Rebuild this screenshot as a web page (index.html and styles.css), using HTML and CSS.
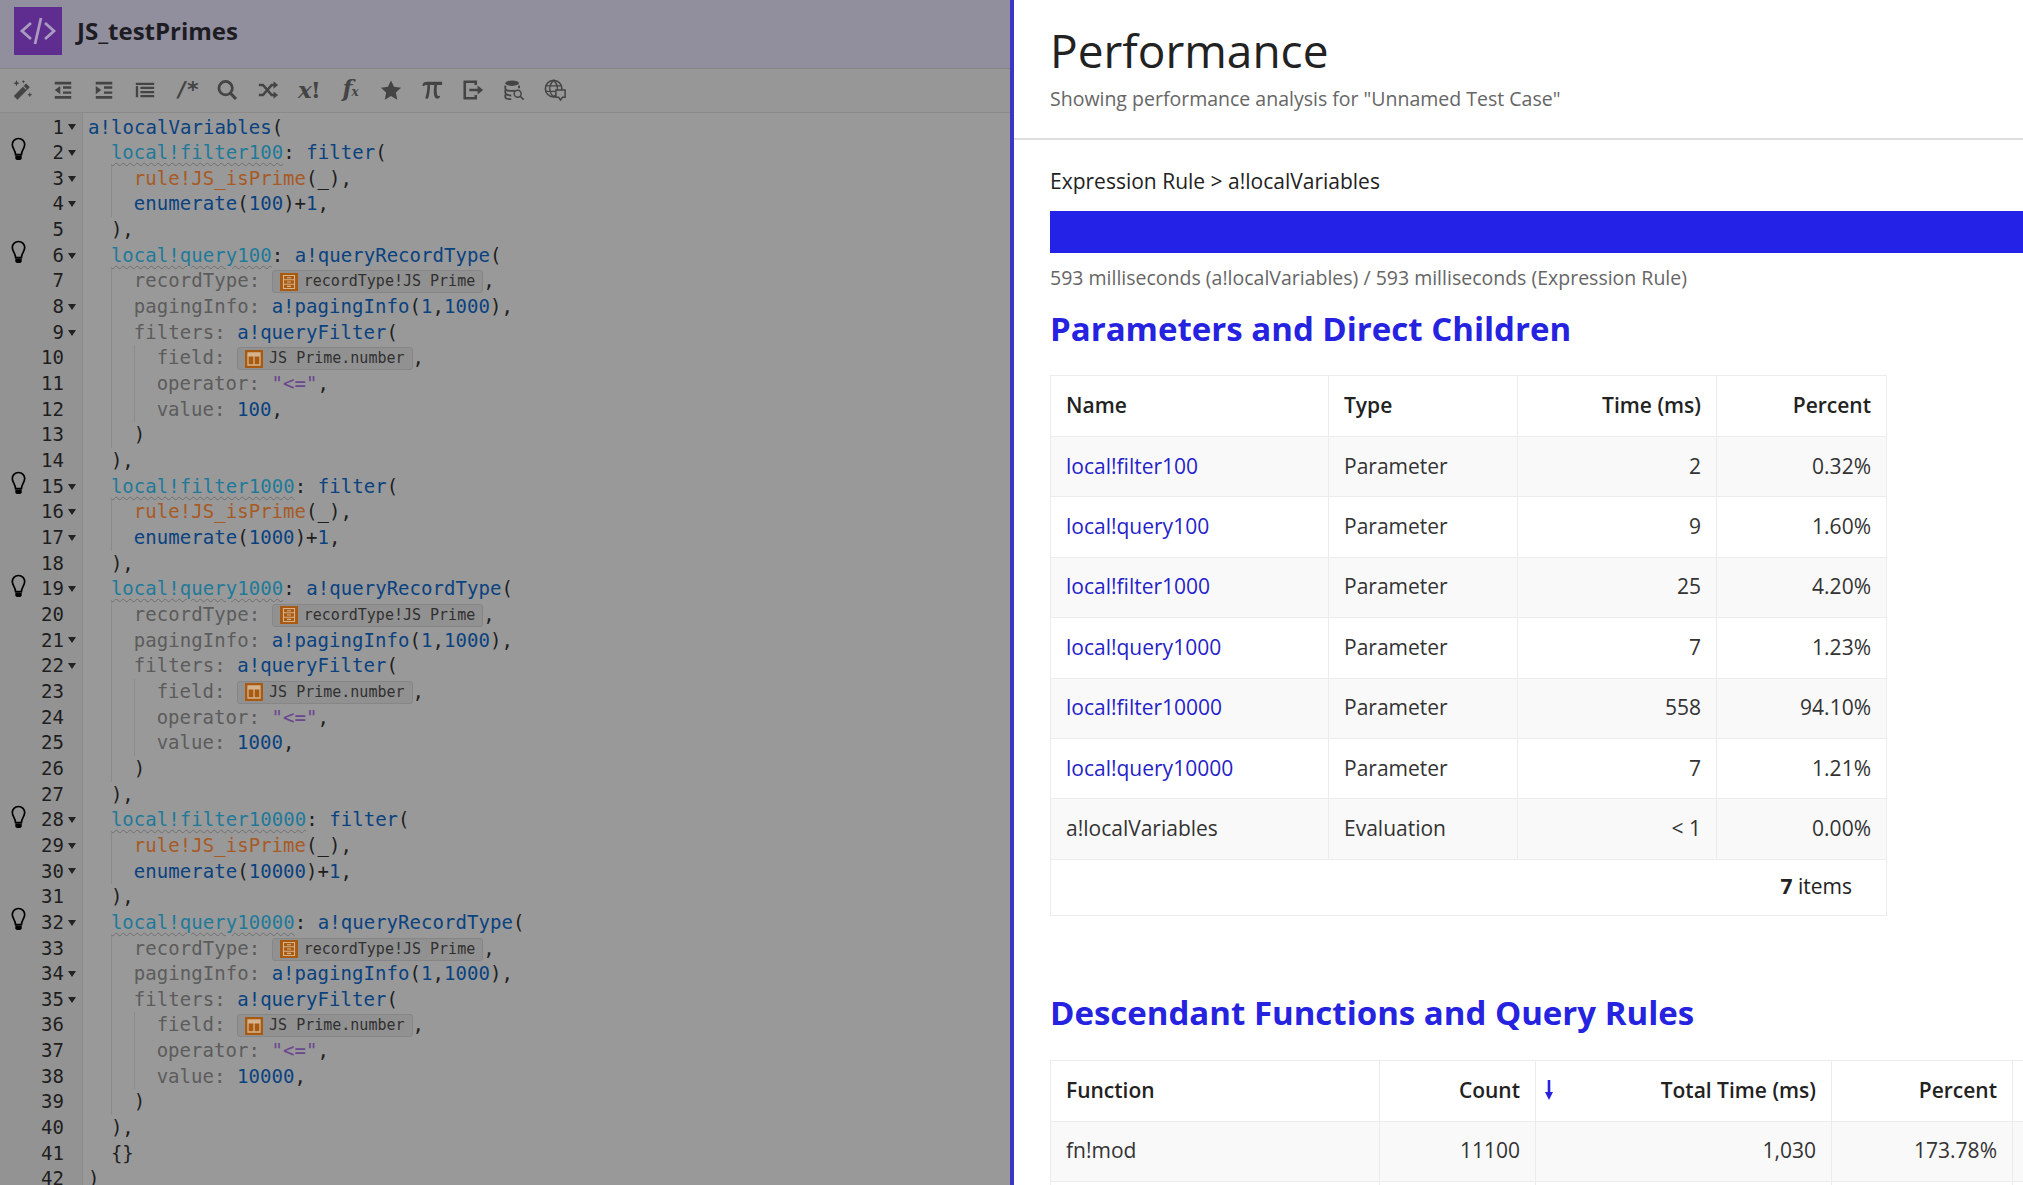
FILE: index.html
```html
<!DOCTYPE html>
<html lang="en">
<head>
<meta charset="utf-8">
<title>JS_testPrimes - Performance</title>
<link rel="stylesheet" href="styles.css">
</head>
<body>
<svg class="defs" aria-hidden="true">
  <symbol id="bulb" viewBox="0 0 16 24"><path d="M8 1.5C4.2 1.5 1.8 4.4 1.8 7.6c0 3.6 3 5.4 3.3 10h5.8c.3-4.6 3.3-6.4 3.3-10C14.200 4.400 11.800 1.500 8 1.500z" fill="none" stroke="#000" stroke-width="1.700"/><path d="M4.800 18.500h6.400v3.200l-1.400 1.300H6.200l-1.400-1.300z" fill="#000"/></symbol>
  <symbol id="rec" viewBox="0 0 18 18"><rect width="18" height="18" fill="#a85a10"/><path d="M3.500 2.500h11v13h-11zM3.500 6.800h11M3.500 11.200h11M7 4.700h4M7 9h4M7 13.400h4" fill="none" stroke="#d4b48e" stroke-width="1.100"/></symbol>
  <symbol id="fld" viewBox="0 0 18 18"><rect width="18" height="18" fill="#a85a10"/><path d="M3 3h12v12H3z" fill="none" stroke="#d4b48e" stroke-width="1.300"/><path d="M3 3h12v3.500H3z" fill="#d4b48e"/><path d="M9 6v9" stroke="#d4b48e" stroke-width="1.300"/></symbol>
</svg>
<div class="app">
  <section class="editor">
    <header class="ehead">
      <div class="logo">
        <svg viewBox="0 0 48 48" class="logo-svg"><path d="M17 16 8 24l9 8M31 16l9 8-9 8M27 11l-6 26" fill="none" stroke="#a99cc0" stroke-width="2.800"/></svg>
      </div>
      <h1 class="ename">JS_testPrimes</h1>
    </header>
    <div class="tools">
      <svg class="tool" viewBox="0 0 24 24"><path d="M3 18.500 16.500 5l4 4L7 22.500z" fill="#444"/><path d="M13.500 8l3 3" stroke="#979797" stroke-width="1.200"/><path d="M6 1l1 2.500L9.500 4.500 7 5.500 6 8 5 5.500 2.500 4.500 5 3.500zM20.500 14.500l.8 1.900 1.900.8-1.900.8-.8 1.900-.8-1.900-1.900-.8 1.900-.8zM13.500 1l.6 1.300 1.300.6-1.300.6-.6 1.300-.6-1.300-1.300-.6 1.300-.6z" fill="#444"/></svg>
      <svg class="tool" viewBox="0 0 24 24"><path d="M3 3h18v3H3zM3 18.500h18v3H3zM12 8h9v2.500h-9zM12 13.500h9V16h-9zM9 7.500v9l-6-4.500z" fill="#444"/></svg>
      <svg class="tool" viewBox="0 0 24 24"><path d="M3 3h18v3H3zM3 18.500h18v3H3zM12 8h9v2.500h-9zM12 13.500h9V16h-9zM3 7.500v9L9 12z" fill="#444"/></svg>
      <svg class="tool" viewBox="0 0 24 24"><path d="M2 4h20v2.500H2zM2 7.500h2.500V20H2zM7 8.500h15V11H7zM7 13h15v2.500H7zM7 17.500h15V20H7z" fill="#444"/></svg>
      <span class="tool-t slash">/*</span>
      <svg class="tool" viewBox="0 0 24 24"><circle cx="10.500" cy="10" r="7.300" fill="none" stroke="#444" stroke-width="3"/><path d="m15.800 15.500 6 6.300" stroke="#444" stroke-width="3.400"/></svg>
      <svg class="tool" viewBox="0 0 24 24"><path d="M2 6.500h4.500L16 17.500h3M2 17.500h4.500L16 6.500h3" fill="none" stroke="#444" stroke-width="2.800"/><path d="M18 2.500l5 4-5 4zM18 13.500l5 4-5 4z" fill="#444"/></svg>
      <span class="tool-t xf"><em class="xi">x</em>!</span>
      <span class="tool-t xf"><em class="xi">f</em><small class="sub">x</small></span>
      <svg class="tool" viewBox="0 0 24 24"><path d="m12 1.500 3.300 7 7.700 1-5.700 5.200 1.500 7.800-6.800-3.900-6.800 3.900 1.500-7.800L1 9.500l7.700-1z" fill="#444"/></svg>
      <svg class="tool" viewBox="0 0 24 24"><path d="M1.500 7C2 4 4 3 6.500 3H23v3.500h-5.500c-.5 4-.6 8 .2 11 .3 1.200 1.500 1.500 2.300.7l1 .8c-1.200 2.300-3.200 3-4.800 2-2-1.300-2.500-5-2.200-9 .1-1.900.3-3.800.5-5.500H9.800c0 5-.6 10-1.800 14.300-.3 1-2.800 1-3.300-.1C6.300 16 7 11 7 6.500c-2 0-3.500.3-4.300 1.500z" fill="#444"/></svg>
      <svg class="tool" viewBox="0 0 24 24"><path d="M15 6.500V3H3v18h12v-3.500" fill="none" stroke="#444" stroke-width="2.800"/><path d="M8 10.700h9V7l6 5-6 5v-3.700H8z" fill="#444"/></svg>
      <svg class="tool" viewBox="0 0 24 24"><ellipse cx="10" cy="4.500" rx="7.500" ry="3" fill="#444"/><path d="M2.500 7v3c0 1.700 3.300 3 7.500 3 1 0 2-.1 2.800-.2M17.500 7v3M2.500 12v3c0 1.700 3.300 3 6.500 3M2.500 17v2.500c0 1.400 3 2.500 6.500 2.500" fill="none" stroke="#444" stroke-width="2"/><circle cx="16" cy="16" r="3.800" fill="none" stroke="#444" stroke-width="1.600"/><path d="m18.800 18.800 3.700 3.700" stroke="#444" stroke-width="1.800"/></svg>
      <svg class="tool" viewBox="0 0 24 24"><circle cx="10.500" cy="10.500" r="9" fill="none" stroke="#444" stroke-width="1.800"/><path d="M10.500 1.500c-5.500 5-5.500 13 0 18M10.500 1.500c5.500 5 5.500 13 0 18M1.500 7.500h18M1.500 13.500h12" fill="none" stroke="#444" stroke-width="1.500"/><path d="M13 12h10v8h-3l-2 3-2-3h-3z" fill="#979797" stroke="#444" stroke-width="1.600"/></svg>
    </div>
    <div class="code">
      <div class="line"><span class="gut"><span class="num">1</span><span class="fold"></span></span><span class="src"><b class="f">a!localVariables</b>(</span></div>
      <div class="line"><span class="gut"><svg class="bulb"><use href="#bulb"/></svg><span class="num">2</span><span class="fold"></span></span><span class="src"><i class="s"></i><b class="v">local!filter100</b>: <b class="f">filter</b>(</span></div>
      <div class="line"><span class="gut"><span class="num">3</span><span class="fold"></span></span><span class="src"><i class="s"></i><i class="g"></i><b class="r">rule!JS_isPrime</b>(_),</span></div>
      <div class="line"><span class="gut"><span class="num">4</span><span class="fold"></span></span><span class="src"><i class="s"></i><i class="g"></i><b class="f">enumerate</b>(<b class="n">100</b>)+<b class="n">1</b>,</span></div>
      <div class="line"><span class="gut"><span class="num">5</span></span><span class="src"><i class="s"></i>),</span></div>
      <div class="line"><span class="gut"><svg class="bulb"><use href="#bulb"/></svg><span class="num">6</span><span class="fold"></span></span><span class="src"><i class="s"></i><b class="v">local!query100</b>: <b class="f">a!queryRecordType</b>(</span></div>
      <div class="line"><span class="gut"><span class="num">7</span></span><span class="src"><i class="s"></i><i class="g"></i><b class="k">recordType: </b><span class="pill"><svg class="pic"><use href="#rec"/></svg>recordType!JS Prime</span>,</span></div>
      <div class="line"><span class="gut"><span class="num">8</span><span class="fold"></span></span><span class="src"><i class="s"></i><i class="g"></i><b class="k">pagingInfo: </b><b class="f">a!pagingInfo</b>(<b class="n">1</b>,<b class="n">1000</b>),</span></div>
      <div class="line"><span class="gut"><span class="num">9</span><span class="fold"></span></span><span class="src"><i class="s"></i><i class="g"></i><b class="k">filters: </b><b class="f">a!queryFilter</b>(</span></div>
      <div class="line"><span class="gut"><span class="num">10</span></span><span class="src"><i class="s"></i><i class="g"></i><i class="g"></i><b class="k">field: </b><span class="pill"><svg class="pic"><use href="#fld"/></svg>JS Prime.number</span>,</span></div>
      <div class="line"><span class="gut"><span class="num">11</span></span><span class="src"><i class="s"></i><i class="g"></i><i class="g"></i><b class="k">operator: </b><b class="st">"&lt;="</b>,</span></div>
      <div class="line"><span class="gut"><span class="num">12</span></span><span class="src"><i class="s"></i><i class="g"></i><i class="g"></i><b class="k">value: </b><b class="n">100</b>,</span></div>
      <div class="line"><span class="gut"><span class="num">13</span></span><span class="src"><i class="s"></i><i class="g"></i>)</span></div>
      <div class="line"><span class="gut"><span class="num">14</span></span><span class="src"><i class="s"></i>),</span></div>
      <div class="line"><span class="gut"><svg class="bulb"><use href="#bulb"/></svg><span class="num">15</span><span class="fold"></span></span><span class="src"><i class="s"></i><b class="v">local!filter1000</b>: <b class="f">filter</b>(</span></div>
      <div class="line"><span class="gut"><span class="num">16</span><span class="fold"></span></span><span class="src"><i class="s"></i><i class="g"></i><b class="r">rule!JS_isPrime</b>(_),</span></div>
      <div class="line"><span class="gut"><span class="num">17</span><span class="fold"></span></span><span class="src"><i class="s"></i><i class="g"></i><b class="f">enumerate</b>(<b class="n">1000</b>)+<b class="n">1</b>,</span></div>
      <div class="line"><span class="gut"><span class="num">18</span></span><span class="src"><i class="s"></i>),</span></div>
      <div class="line"><span class="gut"><svg class="bulb"><use href="#bulb"/></svg><span class="num">19</span><span class="fold"></span></span><span class="src"><i class="s"></i><b class="v">local!query1000</b>: <b class="f">a!queryRecordType</b>(</span></div>
      <div class="line"><span class="gut"><span class="num">20</span></span><span class="src"><i class="s"></i><i class="g"></i><b class="k">recordType: </b><span class="pill"><svg class="pic"><use href="#rec"/></svg>recordType!JS Prime</span>,</span></div>
      <div class="line"><span class="gut"><span class="num">21</span><span class="fold"></span></span><span class="src"><i class="s"></i><i class="g"></i><b class="k">pagingInfo: </b><b class="f">a!pagingInfo</b>(<b class="n">1</b>,<b class="n">1000</b>),</span></div>
      <div class="line"><span class="gut"><span class="num">22</span><span class="fold"></span></span><span class="src"><i class="s"></i><i class="g"></i><b class="k">filters: </b><b class="f">a!queryFilter</b>(</span></div>
      <div class="line"><span class="gut"><span class="num">23</span></span><span class="src"><i class="s"></i><i class="g"></i><i class="g"></i><b class="k">field: </b><span class="pill"><svg class="pic"><use href="#fld"/></svg>JS Prime.number</span>,</span></div>
      <div class="line"><span class="gut"><span class="num">24</span></span><span class="src"><i class="s"></i><i class="g"></i><i class="g"></i><b class="k">operator: </b><b class="st">"&lt;="</b>,</span></div>
      <div class="line"><span class="gut"><span class="num">25</span></span><span class="src"><i class="s"></i><i class="g"></i><i class="g"></i><b class="k">value: </b><b class="n">1000</b>,</span></div>
      <div class="line"><span class="gut"><span class="num">26</span></span><span class="src"><i class="s"></i><i class="g"></i>)</span></div>
      <div class="line"><span class="gut"><span class="num">27</span></span><span class="src"><i class="s"></i>),</span></div>
      <div class="line"><span class="gut"><svg class="bulb"><use href="#bulb"/></svg><span class="num">28</span><span class="fold"></span></span><span class="src"><i class="s"></i><b class="v">local!filter10000</b>: <b class="f">filter</b>(</span></div>
      <div class="line"><span class="gut"><span class="num">29</span><span class="fold"></span></span><span class="src"><i class="s"></i><i class="g"></i><b class="r">rule!JS_isPrime</b>(_),</span></div>
      <div class="line"><span class="gut"><span class="num">30</span><span class="fold"></span></span><span class="src"><i class="s"></i><i class="g"></i><b class="f">enumerate</b>(<b class="n">10000</b>)+<b class="n">1</b>,</span></div>
      <div class="line"><span class="gut"><span class="num">31</span></span><span class="src"><i class="s"></i>),</span></div>
      <div class="line"><span class="gut"><svg class="bulb"><use href="#bulb"/></svg><span class="num">32</span><span class="fold"></span></span><span class="src"><i class="s"></i><b class="v">local!query10000</b>: <b class="f">a!queryRecordType</b>(</span></div>
      <div class="line"><span class="gut"><span class="num">33</span></span><span class="src"><i class="s"></i><i class="g"></i><b class="k">recordType: </b><span class="pill"><svg class="pic"><use href="#rec"/></svg>recordType!JS Prime</span>,</span></div>
      <div class="line"><span class="gut"><span class="num">34</span><span class="fold"></span></span><span class="src"><i class="s"></i><i class="g"></i><b class="k">pagingInfo: </b><b class="f">a!pagingInfo</b>(<b class="n">1</b>,<b class="n">1000</b>),</span></div>
      <div class="line"><span class="gut"><span class="num">35</span><span class="fold"></span></span><span class="src"><i class="s"></i><i class="g"></i><b class="k">filters: </b><b class="f">a!queryFilter</b>(</span></div>
      <div class="line"><span class="gut"><span class="num">36</span></span><span class="src"><i class="s"></i><i class="g"></i><i class="g"></i><b class="k">field: </b><span class="pill"><svg class="pic"><use href="#fld"/></svg>JS Prime.number</span>,</span></div>
      <div class="line"><span class="gut"><span class="num">37</span></span><span class="src"><i class="s"></i><i class="g"></i><i class="g"></i><b class="k">operator: </b><b class="st">"&lt;="</b>,</span></div>
      <div class="line"><span class="gut"><span class="num">38</span></span><span class="src"><i class="s"></i><i class="g"></i><i class="g"></i><b class="k">value: </b><b class="n">10000</b>,</span></div>
      <div class="line"><span class="gut"><span class="num">39</span></span><span class="src"><i class="s"></i><i class="g"></i>)</span></div>
      <div class="line"><span class="gut"><span class="num">40</span></span><span class="src"><i class="s"></i>),</span></div>
      <div class="line"><span class="gut"><span class="num">41</span></span><span class="src"><i class="s"></i>{}</span></div>
      <div class="line"><span class="gut"><span class="num">42</span></span><span class="src">)</span></div>
    </div>
  </section>
  <main class="perf">
    <header class="phead">
      <h1 class="ptitle">Performance</h1>
      <p class="psub">Showing performance analysis for "Unnamed Test Case"</p>
    </header>
    <div class="pbody">
      <p class="crumb">Expression Rule &gt; a!localVariables</p>
      <div class="bar"></div>
      <p class="meta">593 milliseconds (a!localVariables) / 593 milliseconds (Expression Rule)</p>
      <h2 class="h2">Parameters and Direct Children</h2>
      <table class="tbl t1">
        <colgroup><col class="c1a"><col class="c1b"><col class="c1c"><col class="c1d"></colgroup>
        <thead><tr><th>Name</th><th>Type</th><th class="ra">Time (ms)</th><th class="ra">Percent</th></tr></thead>
        <tbody>
          <tr><td><a class="lnk">local!filter100</a></td><td>Parameter</td><td class="ra">2</td><td class="ra">0.32%</td></tr>
          <tr><td><a class="lnk">local!query100</a></td><td>Parameter</td><td class="ra">9</td><td class="ra">1.60%</td></tr>
          <tr><td><a class="lnk">local!filter1000</a></td><td>Parameter</td><td class="ra">25</td><td class="ra">4.20%</td></tr>
          <tr><td><a class="lnk">local!query1000</a></td><td>Parameter</td><td class="ra">7</td><td class="ra">1.23%</td></tr>
          <tr><td><a class="lnk">local!filter10000</a></td><td>Parameter</td><td class="ra">558</td><td class="ra">94.10%</td></tr>
          <tr><td><a class="lnk">local!query10000</a></td><td>Parameter</td><td class="ra">7</td><td class="ra">1.21%</td></tr>
          <tr><td>a!localVariables</td><td>Evaluation</td><td class="ra">&lt; 1</td><td class="ra">0.00%</td></tr>
        </tbody>
        <tfoot><tr><td colspan="4" class="foot"><b>7</b> items</td></tr></tfoot>
      </table>
      <h2 class="h2 h2b">Descendant Functions and Query Rules</h2>
      <table class="tbl t2">
        <colgroup><col class="c2a"><col class="c2b"><col class="c2c"><col class="c2d"><col class="c2e"></colgroup>
        <thead><tr><th>Function</th><th class="ra">Count</th><th class="ra"><span class="sorted"><svg class="arrow" viewBox="0 0 10 24"><path d="M5 2v14" stroke="#2522e0" stroke-width="2.600"/><path d="M1 14h8l-4 8z" fill="#2522e0"/></svg>Total Time (ms)</span></th><th class="ra">Percent</th><th></th></tr></thead>
        <tbody>
          <tr><td>fn!mod</td><td class="ra">11100</td><td class="ra">1,030</td><td class="ra">173.78%</td><td></td></tr>
          <tr><td></td><td></td><td></td><td></td><td></td></tr>
        </tbody>
      </table>
    </div>
  </main>
</div>
</body>
</html>
```

FILE: styles.css
```css
* { box-sizing: border-box; }
html, body { margin: 0; height: 100%; overflow: hidden; background: #fff; }
body { font-family: "Open Sans", "Liberation Sans", sans-serif; color: #222; }
.defs { display: none; }
.app { display: flex; height: 1185px; width: 2023px; overflow: hidden; }

/* Editor pane (dimmed) */
.editor { flex: 0 0 1014px; display: flex; flex-direction: column; background: #999; border-right: 4px solid #3b37c4; overflow: hidden; }
.ehead { flex: 0 0 69px; display: flex; align-items: center; gap: 15px; padding: 0 0 0 14px; background: #918e9e; border-bottom: 1px solid #858585; }
.logo { width: 48px; height: 48px; background: #5e2d8f; margin-top: -7px; }
.logo-svg { display: block; width: 48px; height: 48px; }
.ename { margin: -7px 0 0; font-size: 24px; font-weight: 700; color: #1c1c22; line-height: 30px; }
.tools { flex: 0 0 44px; display: flex; align-items: center; gap: 19px; padding: 0 0 2px 11px; background: #979797; border-bottom: 1px solid #8a8a8a; }
.tool { width: 22px; height: 22px; flex: none; }
.tool-t { width: 22px; flex: none; text-align: center; color: #444; line-height: 24px; }
.slash { font: 700 22px/24px "DejaVu Sans Mono", monospace; letter-spacing: -2px; }
.xf { font: 700 23px/24px "DejaVu Serif", serif; white-space: nowrap; letter-spacing: -1px; }
.xi { font-style: italic; }
.sub { font-size: 12px; font-style: italic; }

.code { flex: 1; padding-top: 1.5px; background: linear-gradient(to right, #939393 82px, #8b8b8b 82px, #8b8b8b 83px, #999 83px); font: 19px/25.66px "DejaVu Sans Mono", monospace; color: #1e1e1e; letter-spacing: .05px; }
.line { display: flex; height: 25.66px; white-space: pre; }
.gut { flex: 0 0 83px; display: flex; align-items: center; padding: 0 3px 0 10px; }
.bulb { width: 17px; height: 24px; flex: none; margin-top: -7px; }
.num { margin-left: auto; margin-right: 16px; }
.fold { width: 0; height: 0; margin-left: -12px; margin-right: 4px; border: 4px solid transparent; border-top: 6px solid #222; border-bottom: 0; }
.src { padding-left: 5px; }
.src b { font-weight: 400; }
.f, .n { color: #0a4280; }
.v { color: #1f7a9a; text-decoration: underline wavy #6f6f6f 1px; text-underline-offset: 3px; }
.r { color: #a85a25; }
.k { color: #5c5c5c; }
.st { color: #6a478f; }
.s, .g { display: inline-block; width: 2ch; height: 25.66px; vertical-align: top; }
.g { border-left: 1px solid #8b8b8b; }
.pill { display: inline-flex; align-items: center; gap: 6px; height: 23px; padding: 0 7px; vertical-align: top; margin-top: 2px; font-size: 15px; line-height: 23px; letter-spacing: 0; color: #303030; background: #919191; border: 1px solid #868686; border-radius: 3px; }
.pic { width: 18px; height: 18px; flex: none; }

/* Performance pane */
.perf { flex: 1; min-width: 0; overflow: hidden; background: #fff; }
.phead { height: 140px; padding: 24px 0 0 36px; border-bottom: 2px solid #dedede; }
.ptitle { margin: 0; font-size: 46px; font-weight: 400; line-height: 52px; color: #222; }
.psub { margin: 9px 0 0; font-size: 19.5px; line-height: 28px; color: #666; }
.pbody { padding: 27px 0 0 36px; }
.crumb { margin: 0; font-size: 21px; line-height: 28px; color: #222; }
.bar { height: 42px; margin-top: 16px; background: #2522e8; }
.meta { margin: 11px 0 0; font-size: 19.5px; line-height: 28px; color: #666; }
.h2 { margin: 15px 0 24px; font-size: 33px; font-weight: 700; line-height: 44px; color: #2522e0; }
.h2b { margin: 75px 0 25px; }

.tbl { border-collapse: collapse; table-layout: fixed; font-size: 21px; color: #333; }
.t1 { width: 836px; }
.t2 { width: 1062px; }
.c1a { width: 278px; } .c1b { width: 189px; } .c1c { width: 199px; } .c1d { width: 170px; }
.c2a { width: 329px; } .c2b { width: 156px; } .c2c { width: 296px; } .c2d { width: 181px; } .c2e { width: 100px; }
.tbl th, .tbl td { border: 1px solid #ececec; padding: 0 15px 2px; text-align: left; height: 60.4px; }
.tbl th { font-weight: 600; color: #222; height: 61px; }
.tbl tbody tr:nth-child(odd) { background: #f9f9f9; }
.tbl .ra { text-align: right; }
.lnk { color: #2522c8; }
.foot { height: 56px !important; padding-right: 34px !important; text-align: right !important; color: #222; }
.foot b { font-weight: 700; }
.sorted { display: flex; justify-content: space-between; align-items: center; margin-left: -7px; }
.arrow { width: 10px; height: 24px; flex: none; }
```
